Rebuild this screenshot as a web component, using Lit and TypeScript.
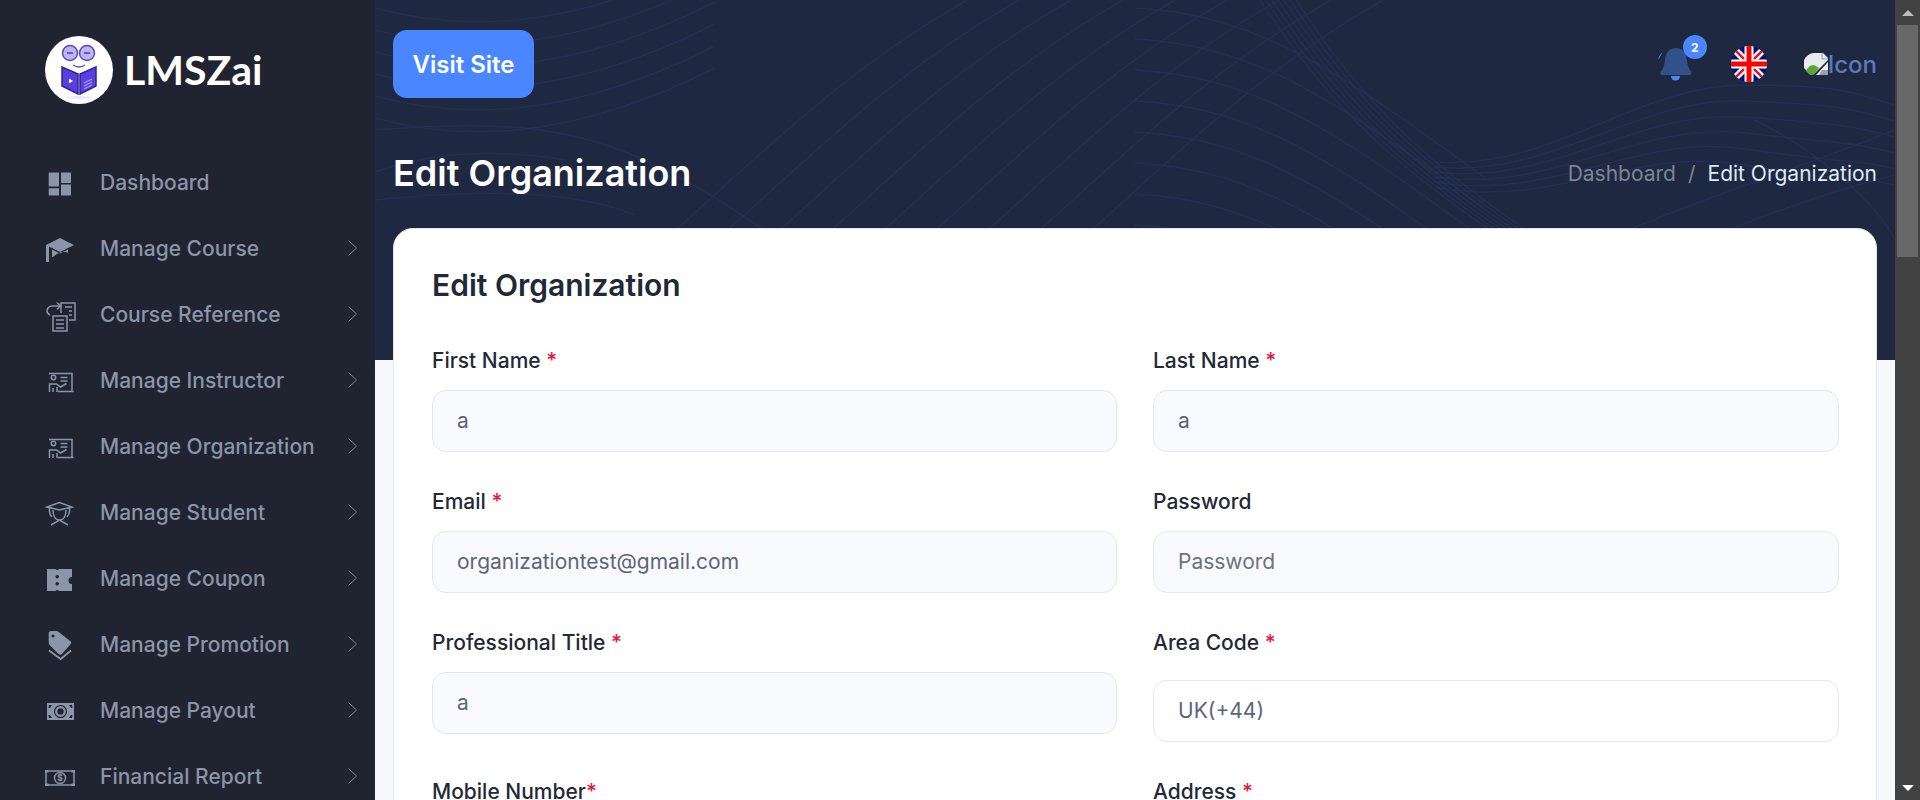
import { LitElement, html, css, svg } from 'lit';
import { customElement } from 'lit/decorators.js';

// icons are drawn on a 30x30 box, some of them run a little past it
const icons: Record<string, unknown> = {
  dashboard: svg`<path fill="currentColor" d="M5.700 5.500H15v14H4.700V6.500a1 1 0 0 1 1-1zM17 5.500h9a1 1 0 0 1 1 1v9.500H17zM4.700 21.200H15V28.500H5.700a1 1 0 0 1-1-1zM17 17.500h10v10a1 1 0 0 1-1 1h-9z"/>`,
  course: svg`<path fill="currentColor" d="M2 12 16 5l14 7-14 7zM8 16.500l8 4 8-4v3.500c-2.500-1.500-5.500-1.700-8-.500-3 1-5 3-8 5zM2 12h3v17H2z"/>`,
  reference: svg`<g fill="none" stroke="currentColor" stroke-width="1.500"><path d="M9 17h14v15H9zM12 21h8M12 25h8M12 29h8M17 14V4h14v17h-6M21 8h7M25 12h3M25 16h3M16 7H8a5 5 0 0 0-5 5c0 2 1 3 3 4"/><path d="m13 3.500 3.500 3.500-3.500 3.500"/></g>`,
  instructor: svg`<g fill="none" stroke="currentColor" stroke-width="1.500"><circle cx="9.500" cy="12.500" r="2.200"/><path d="M5 8.500h23v17.500M14 26.500h15.500M5.500 27v-8h7l4 3 6-3.500M9 27v-4M13 22v5M16.500 12.500h7M16.500 16h7"/></g>`,
  student: svg`<g fill="none" stroke="currentColor" stroke-width="1.500"><path d="M3 10 15.500 5.500 28 10l-12.500 3zM5.500 11c-.500 4 .500 7 2.500 9M25.500 11c.500 4-.500 7-2.500 9M9 13c0 6 2.500 10 6.500 10s6.500-4 6.500-10M7 28l8.500-5 8.500 5"/></g>`,
  coupon: svg`<path fill="currentColor" fill-rule="evenodd" d="M3 6h8.500a2 2 0 0 0 3.500 0h13v8a3.500 3.500 0 0 0 0 7v7H15a2 2 0 0 0-3.500 0H3zM13.200 12a1.700 1.700 0 1 0 .01 0zM13.200 19a1.700 1.700 0 1 0 .01 0z"/>`,
  promotion: svg`<path fill="currentColor" fill-rule="evenodd" d="M7 2h5c1 0 2 .5 3 1.300l11.500 9c1 .8 1 2.200 0 3l-8.500 9.700c-1 1-2.500 1-3.500 0L6 16.500c-1-1-1.300-2-1.300-3V4.500C4.700 3 5.500 2 7 2zM9 5.500a1.500 1.500 0 1 0 .01 0z"/><path fill="none" stroke="currentColor" stroke-width="1.800" d="m5 21.500 11.700 8.500 10.300-8.500"/>`,
  payout: svg`<path fill="currentColor" fill-rule="evenodd" d="M3 8h27v17H3zM16.500 10a6.500 6.500 0 1 0 .01 0zM5 10l-.500 3h1.500l2-3zM28 10h-3l2 3h1.500zM4.500 20l.500 3h3l-2-3zM28.500 20H27l-2 3h3z"/><circle cx="16.500" cy="16.500" r="4.300" fill="none" stroke="currentColor" stroke-width="2.200"/>`,
  report: svg`<g fill="none" stroke="currentColor"><rect x="2" y="10" width="28" height="14" stroke-width="1.500"/><circle cx="16" cy="17" r="5.500" stroke-width="1.400"/></g><path fill="currentColor" d="M1 9h3.500v2.500H1zM27.500 9H31v2.500h-3.500zM1 22.500h3.500V25H1zM27.500 22.500H31V25h-3.500z"/><text x="16" y="20.200" font-size="9" font-weight="700" fill="currentColor" text-anchor="middle" font-family="Inter">$</text>`,
};

const menu = [
  { label: 'Dashboard', icon: 'dashboard', arrow: false },
  { label: 'Manage Course', icon: 'course', arrow: true },
  { label: 'Course Reference', icon: 'reference', arrow: true },
  { label: 'Manage Instructor', icon: 'instructor', arrow: true },
  { label: 'Manage Organization', icon: 'instructor', arrow: true },
  { label: 'Manage Student', icon: 'student', arrow: true },
  { label: 'Manage Coupon', icon: 'coupon', arrow: true },
  { label: 'Manage Promotion', icon: 'promotion', arrow: true },
  { label: 'Manage Payout', icon: 'payout', arrow: true },
  { label: 'Financial Report', icon: 'report', arrow: true },
];

// wavy lines behind the header
const waves: string[] = [
  'M0 130C120 120 200 125 280 165S370 220 420 250',
  'M0 172C60 150 130 150 190 160',
  'M0 200C100 190 200 190 260 215',
];
for (let i = 0; i < 6; i++) {
  const y = 8 + i * 22;
  waves.push(`M0 ${y}C80 ${y + 22} 190 ${y + 26} 340 ${y - 50}`);
}
for (let i = 0; i < 9; i++) {
  const x = 290 + i * 52;
  waves.push(`M${x} 240C${x + 100} 150 ${x + 190} 60 ${x + 320} -10`);
}
for (let i = 0; i < 9; i++) {
  const y = 8 + i * 31;
  waves.push(`M760 ${y}C880 ${y + 6} 960 ${y + 60} 1110 ${y + 170}`);
}
for (let i = 0; i < 7; i++) {
  const x = 885 + i * 6;
  waves.push(`M${x} 0C${x + 60} 90 ${x + 110} 150 ${x + 245} 240`);
}
for (let i = 0; i < 6; i++) {
  waves.push(`M1060 ${162 + i * 5}C1180 ${170 + i * 8} 1260 ${85 + i * 12} 1370 ${85 + i * 16}S1480 ${95 + i * 16} 1520 ${105 + i * 16}`);
}
waves.push('M1230 240C1320 200 1420 170 1520 130', 'M1330 240C1400 210 1460 190 1520 175', 'M1380 120C1440 150 1500 200 1520 240');

@customElement('app-root')
export class AppRoot extends LitElement {
  static styles = css`
    :host {
      display: block;
      height: 800px;
      overflow: hidden;
      font-family: Inter, "Liberation Sans", sans-serif;
    }
    * { box-sizing: border-box; }
    .page { display: flex; height: 800px; overflow: hidden; }

    .sidebar { width: 375px; flex: none; background: #1f2430; }
    .logo { display: flex; align-items: center; gap: 11px; height: 149px; padding: 0 0 9px 45px; }
    .logo-text { font-family: Lato, sans-serif; font-weight: 700; font-size: 41px; color: #fff; margin-bottom: 2px; }
    .item { display: flex; align-items: center; height: 66px; color: #8c94a8; }
    .item-icon { width: 30px; height: 30px; margin-left: 44px; margin-right: 26px; flex: none; overflow: visible; }
    .item-label { flex: 1; font-size: 21px; font-weight: 500; }
    .item-arrow { width: 10px; height: 18px; margin-right: 18px; flex: none; }

    .main { flex: 1; position: relative; background: #f7f8fc; padding: 0 18px; overflow: hidden; }
    .hero-bg { position: absolute; left: 0; top: 0; width: 100%; height: 360px; background: #1e2840; }
    .hero-bg path { fill: none; stroke: #263257; stroke-width: 1.500; opacity: .7; }
    .topbar, .title-row, .card { position: relative; }
    .topbar { display: flex; align-items: center; height: 128px; }
    .visit { display: flex; align-items: center; justify-content: center; width: 141px; height: 68px; background: #4a86ff; border-radius: 14px; color: #fff; font-size: 24px; font-weight: 600; }
    .top-icons { margin-left: auto; display: flex; align-items: center; }
    .bell { position: relative; width: 34px; height: 36px; margin-right: 39px; }
    .bell svg { display: block; width: 34px; height: 36px; }
    .badge { position: absolute; left: 25px; top: -11px; width: 24px; height: 24px; border-radius: 50%; background: #4a86ff; color: #fff; font-size: 12px; font-weight: 700; display: flex; align-items: center; justify-content: center; }
    .flag { width: 36px; height: 36px; margin-right: 37px; }
    .broken { display: flex; align-items: center; color: #5a7ab8; font-size: 24px; font-weight: 500; }
    .broken svg { width: 24px; height: 22px; }

    .title-row { display: flex; align-items: center; justify-content: space-between; height: 100px; padding-bottom: 10px; }
    h1 { margin: 0; font-size: 36px; font-weight: 600; color: #fff; }
    .crumbs { display: flex; gap: 12px; font-size: 21px; color: #7d8494; }
    .crumbs .current { color: #dfe9f7; }

    .card { background: #fff; border: 1px solid #e5e7f0; border-radius: 20px; padding: 38px 37px 40px 38px; }
    h2 { margin: 0 0 45px; font-size: 30px; font-weight: 600; color: #1f2937; line-height: 36px; }
    .form { display: grid; grid-template-columns: 685px 686px; column-gap: 36px; row-gap: 37px; }
    label { display: block; font-size: 21px; font-weight: 500; color: #1f2937; line-height: 26px; margin-bottom: 16px; }
    .req { color: #e8173f; }
    input { display: block; width: 100%; height: 62px; padding: 0 24px 2px; border: 1px solid #e4e7ee; border-radius: 14px; background: #f9fafd; font: 400 21px Inter, sans-serif; color: #5d6579; outline: none; }
    input::placeholder { color: #6b7280; opacity: 1; }
    input.plain { background: #fff; margin-top: 24px; }

    .scrollbar { width: 25px; flex: none; background: #424242; display: flex; flex-direction: column; align-items: center; }
    .scroll-btn { height: 25px; flex: none; display: flex; align-items: center; justify-content: center; }
    .thumb { width: 21px; height: 232px; background: #686868; }
    .scroll-gap { flex: 1; }
  `;

  private field(name: string, value: string, required = true, opts: { placeholder?: string; plain?: boolean; tight?: boolean } = {}) {
    return html`<div>
      <label>${name}${required ? html`${opts.tight ? '' : ' '}<span class="req">*</span>` : ''}</label>
      <input class=${opts.plain ? 'plain' : ''} .value=${value} placeholder=${opts.placeholder ?? ''} />
    </div>`;
  }

  render() {
    return html`<div class="page">
      <aside class="sidebar">
        <div class="logo">
          <svg width="68" height="68" viewBox="0 0 68 68">
            <circle cx="34" cy="34" r="34" fill="#fff"/>
            <circle cx="25" cy="17" r="7.500" fill="#bdb4f2" stroke="#5b48c9" stroke-width="1.500"/>
            <circle cx="42" cy="17" r="7.500" fill="#bdb4f2" stroke="#5b48c9" stroke-width="1.500"/>
            <path d="M22 17h6M39 17h6" stroke="#4b3bb0" stroke-width="1.500"/>
            <path d="M28 29q6 4 12 0" fill="none" stroke="#5b48c9" stroke-width="1.500"/>
            <path fill="#5a3fe0" stroke="#2f2490" stroke-width="1.500" d="M17 31l16 7v20l-16-8zM51 31l-16 7v20l16-8z"/>
            <path fill="#fff" d="M24 42.500l4 2.500-4 2.500z"/>
            <path d="M39 47l8-4M39 50l8-4M39 53l8-4" stroke="#a99cf5" stroke-width="1.200"/>
            <ellipse cx="34" cy="61.500" rx="13" ry="1.500" fill="#e9e6fb"/>
          </svg>
          <span class="logo-text">LMSZai</span>
        </div>
        ${menu.map(
          (m) => html`<div class="item">
            <svg class="item-icon" viewBox="0 0 30 30">${icons[m.icon]}</svg>
            <span class="item-label">${m.label}</span>
            ${m.arrow
              ? html`<svg class="item-arrow" viewBox="0 0 10 18"><path d="m1.500 1.500 8 7.500-8 7.500" fill="none" stroke="#7c8497" stroke-width="1"/></svg>`
              : ''}
          </div>`
        )}
      </aside>

      <main class="main">
        <div class="hero-bg">
          <svg width="1520" height="360" viewBox="0 0 1520 360">${waves.map((d) => svg`<path d=${d}/>`)}</svg>
        </div>
        <div class="topbar">
          <div class="visit">Visit Site</div>
          <div class="top-icons">
            <div class="bell">
              <svg viewBox="0 0 34 36">
                <path fill="#32508a" d="M18 2c7 0 10.500 5 11 12 .3 5 1.500 8 4 12 1 1.500 0 3-1.500 3H4c-1.500 0-2.500-1.500-1.500-3 3-4 4-7 4.500-12C7.500 7 11 2 18 2z"/>
                <path fill="#4a86ff" d="M13 30h9a4.500 4.500 0 0 1-9 0z"/>
                <path fill="#4a86ff" d="M5 6c-3 2-5 5-4.500 8 1-3 2.500-5 4.500-8z"/>
              </svg>
              <span class="badge">2</span>
            </div>
            <svg class="flag" viewBox="0 0 36 36">
              <defs><clipPath id="c"><circle cx="18" cy="18" r="18"/></clipPath></defs>
              <g clip-path="url(#c)">
                <rect width="36" height="36" fill="#00107e"/>
                <path d="M0 0l36 36M36 0 0 36" stroke="#fff" stroke-width="7"/>
                <path d="M0 0l36 36M36 0 0 36" stroke="#e8112d" stroke-width="2.500"/>
                <path d="M18 0v36M0 18h36" stroke="#fff" stroke-width="9"/>
                <path d="M18 0v36M0 18h36" stroke="#ff0000" stroke-width="5"/>
              </g>
            </svg>
            <div class="broken">
              <svg viewBox="0 0 24 22">
                <path fill="#e8ecef" d="M10 0h9l5 5v17H7L0 15V8c0-3 5-8 10-8z"/>
                <path fill="none" stroke="#9aa0a6" d="M18 0v6h6"/>
                <path fill="#5aa832" d="M2 18c2-4 6-8 10-5l3 2-6 7H6z"/>
                <path fill="#1e2840" d="M24 7v2L12 22H9z"/>
                <path fill="#9aa0a6" d="M18 17h6v5h-9z"/>
              </svg>
              <span>Icon</span>
            </div>
          </div>
        </div>
        <div class="title-row">
          <h1>Edit Organization</h1>
          <div class="crumbs"><span>Dashboard</span><span>/</span><span class="current">Edit Organization</span></div>
        </div>
        <section class="card">
          <h2>Edit Organization</h2>
          <div class="form">
            ${this.field('First Name', 'a')}
            ${this.field('Last Name', 'a')}
            ${this.field('Email', 'organizationtest@gmail.com')}
            ${this.field('Password', '', false, { placeholder: 'Password' })}
            ${this.field('Professional Title', 'a')}
            ${this.field('Area Code', 'UK(+44)', true, { plain: true })}
            ${this.field('Mobile Number', '', true, { tight: true })}
            ${this.field('Address', '')}
          </div>
        </section>
      </main>

      <div class="scrollbar">
        <div class="scroll-btn"><svg width="12" height="6"><path d="M6 0l6 6H0z" fill="#bdbdbd"/></svg></div>
        <div class="thumb"></div>
        <div class="scroll-gap"></div>
        <div class="scroll-btn"><svg width="12" height="6"><path d="M6 6l6-6H0z" fill="#fff"/></svg></div>
      </div>
    </div>`;
  }
}
